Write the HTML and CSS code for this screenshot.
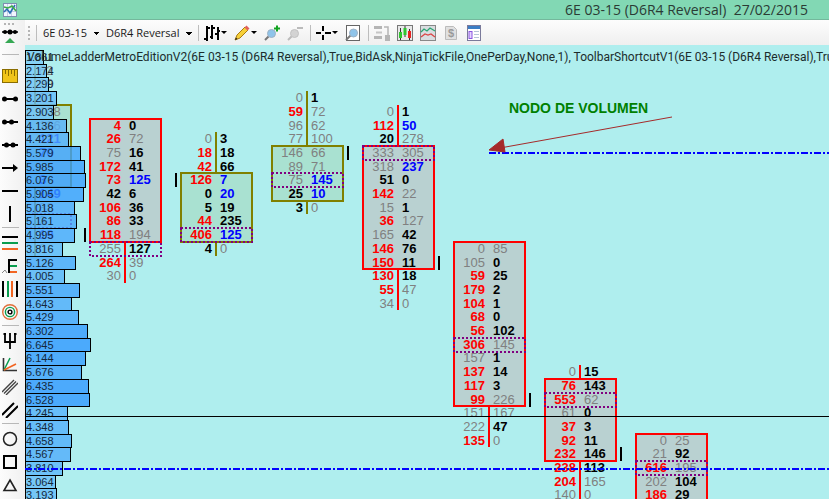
FILE: index.html
```
<!DOCTYPE html>
<html lang="es">
<head>
<meta charset="UTF-8">
<meta name="viewport" content="width=device-width, initial-scale=1.0">
<title>6E 03-15 (D6R4 Reversal)</title>
<link rel="stylesheet" href="styles.css">
</head>
<body>
<header class="titlebar">
    <svg class="app-icon" width="14" height="14" viewBox="0 0 14 14">
        <rect x="0.5" y="0.5" width="13" height="13" fill="#f2f5ff" stroke="#7f8fb0"/>
        <path d="M1 4.5h12M1 8.5h12M4.5 1v12M8.5 1v12" stroke="#c5cfe8"/>
        <path d="M1 9l3-3 3 4 5-8" fill="none" stroke="#2b6fb5" stroke-width="1.6"/>
        <path d="M1 4l4 1 4 -2 4 5" fill="none" stroke="#3fae49" stroke-width="1.6"/>
    </svg>
    <h1>6E 03-15 (D6R4 Reversal)&nbsp; 27/02/2015</h1>
</header>
<div class="window">
    <nav class="sidebar" aria-label="Dibujo">
        <span class="grip-h"></span>
        <button class="first" aria-label="Marcador"><svg width="16" height="18" viewBox="0 0 16 18"><path d="M0 5h16" stroke="#000" stroke-width="1.5"/><circle cx="3" cy="5" r="2"/><circle cx="8" cy="5" r="2.5"/><circle cx="13" cy="5" r="2"/><path d="M8 11l5 5H3z" fill="#35a853"/></svg></button>
        <hr>
        <button class="ruler" aria-label="Regla"><svg width="16" height="16" viewBox="0 0 16 16"><rect x="0.5" y="1.5" width="15" height="13" fill="#f0c419" stroke="#8a6d00"/><path d="M3.5 2v4M6.5 2v6M9.5 2v4M12.5 2v6" stroke="#8a6d00"/></svg></button>
        <button aria-label="Segmento"><svg width="16" height="16" viewBox="0 0 16 16"><path d="M2 8h12" stroke="#000" stroke-width="2"/><circle cx="2.5" cy="8" r="2.5"/><circle cx="13.5" cy="8" r="2.5"/></svg></button>
        <button aria-label="Rayo"><svg width="16" height="16" viewBox="0 0 16 16"><path d="M1 8h15" stroke="#000" stroke-width="2"/><circle cx="2.5" cy="8" r="2.5"/><circle cx="9.5" cy="8" r="2.5"/></svg></button>
        <button aria-label="Recta"><svg width="16" height="16" viewBox="0 0 16 16"><path d="M0 8h16" stroke="#000" stroke-width="2"/><circle cx="4.5" cy="8" r="2.5"/><circle cx="11" cy="8" r="2.5"/></svg></button>
        <button aria-label="Flecha"><svg width="16" height="16" viewBox="0 0 16 16"><path d="M0 8h13" stroke="#000" stroke-width="2"/><path d="M11 4l5 4-5 4z"/></svg></button>
        <button aria-label="Horizontal"><svg width="16" height="16" viewBox="0 0 16 16"><path d="M0 8h16" stroke="#000" stroke-width="2"/></svg></button>
        <button aria-label="Vertical"><svg width="16" height="16" viewBox="0 0 16 16"><path d="M8 0v16" stroke="#000" stroke-width="2"/></svg></button>
        <hr>
        <button aria-label="Niveles"><svg width="16" height="16" viewBox="0 0 16 16"><path d="M0 2h16" stroke="#000" stroke-width="2"/><path d="M0 8h16" stroke="#0a9d4f" stroke-width="2"/><path d="M0 14h16" stroke="#f26522" stroke-width="2"/></svg></button>
        <button aria-label="Extensiones"><svg width="16" height="16" viewBox="0 0 16 16"><path d="M0 15l3-3 2 3" fill="none" stroke="#888"/><path d="M7 15V2h8" fill="none" stroke="#000" stroke-width="2"/><path d="M8 8h7" stroke="#0a9d4f" stroke-width="2"/><path d="M8 14h7" stroke="#f26522" stroke-width="2"/></svg></button>
        <button aria-label="Tiempos"><svg width="16" height="16" viewBox="0 0 16 16"><path d="M1 0v16M15 0v16" stroke="#000" stroke-width="2"/><path d="M6 0v16" stroke="#0a9d4f" stroke-width="2"/><path d="M10 0v16" stroke="#f26522" stroke-width="2"/></svg></button>
        <button aria-label="Arcos"><svg width="16" height="16" viewBox="0 0 16 16" fill="none" stroke-width="1.4"><circle cx="8" cy="8" r="7.3" stroke="#e0703c"/><circle cx="8" cy="8" r="4.6" stroke="#0a9d4f"/><circle cx="8" cy="8" r="1.9" stroke="#000"/></svg></button>
        <hr>
        <button aria-label="Horquilla"><svg width="16" height="16" viewBox="0 0 16 16"><path d="M3 0v9h10V0M8 0v16M1.5 1H4M12 1h2.5" fill="none" stroke="#000" stroke-width="1.8"/></svg></button>
        <button aria-label="Abanico"><svg width="16" height="16" viewBox="0 0 16 16" fill="none"><path d="M1.5 2v12.5H15" stroke="#333" stroke-width="1.6"/><path d="M2 14L8 2" stroke="#0a9d4f" stroke-width="1.6"/><path d="M2 14l12-6" stroke="#f26522" stroke-width="1.6"/></svg></button>
        <button aria-label="Regresión"><svg width="16" height="16" viewBox="0 0 16 16" fill="none"><path d="M0 13L12 1M2 14.500L14 2.500M4 16L16 4" stroke="#444" stroke-width="1.400"/></svg></button>
        <button aria-label="Canal"><svg width="16" height="16" viewBox="0 0 16 16" fill="none"><path d="M0 13L12 1M4 16L16 4" stroke="#000" stroke-width="2"/></svg></button>
        <hr>
        <button aria-label="Elipse"><svg width="16" height="16" viewBox="0 0 16 16"><circle cx="8" cy="8" r="6.5" fill="none" stroke="#222" stroke-width="1.5"/></svg></button>
        <button aria-label="Rectángulo"><svg width="16" height="16" viewBox="0 0 16 16"><rect x="2" y="2" width="12" height="12" fill="none" stroke="#000" stroke-width="2"/></svg></button>
        <button aria-label="Triángulo"><svg width="16" height="16" viewBox="0 0 16 16"><path d="M8 3L14 13.5H2z" fill="none" stroke="#222" stroke-width="1.6"/></svg></button>
    </nav>
    <main class="content">
        <div class="toolbar">
            <span class="grip-v"></span>
            <span class="sep"></span>
            <select class="instrument" aria-label="Instrumento"><option>6E 03-15</option></select>
            <select class="template" aria-label="Plantilla"><option>D6R4 Reversal</option></select>
            <span class="sep"></span>
            <button class="drop" aria-label="Estilo"><svg width="16" height="16" viewBox="0 0 16 16"><path d="M3 1v15M8 0v14M14 2v13M0 14h3M3 3h3M6 12h2M8 3h3M11 9h3M14 6h2" stroke="#000" stroke-width="2"/></svg></button>
            <button class="drop" aria-label="Lápiz"><svg width="16" height="16" viewBox="0 0 16 16"><path d="M1 15l2-5 8-8 3 3-8 8z" fill="#f7d038" stroke="#a87b12"/><path d="M10.5 2.5l2-2 3 3-2 2z" fill="#e0605c"/><path d="M1 15l1-2.5L3.500 14z" fill="#222"/></svg></button>
            <button aria-label="Acercar"><svg width="16" height="16" viewBox="0 0 16 16"><path d="M1 15l4-4" stroke="#777" stroke-width="2"/><circle cx="7.500" cy="8.500" r="4" fill="#8fc4ea" stroke="#9db1c4"/><path d="M10 3.500h6M13 .5v6" stroke="#13a322" stroke-width="2"/></svg></button>
            <button aria-label="Alejar"><svg width="16" height="16" viewBox="0 0 16 16"><path d="M1 15l4-4" stroke="#bbb" stroke-width="2"/><circle cx="7.500" cy="8.500" r="4" fill="#d3d3d3" stroke="#c2c2c2"/><path d="M10 3h6" stroke="#bbb" stroke-width="2"/></svg></button>
            <span class="sep"></span>
            <button class="drop" aria-label="Cursor"><svg width="15" height="16" viewBox="0 0 15 16"><path d="M0 8h5M9 8h6M7 1v5M7 10v5" stroke="#000" stroke-width="2"/></svg></button>
            <button aria-label="Ampliar zona"><svg width="16" height="16" viewBox="0 0 16 16"><rect x="1.5" y="0.5" width="13" height="15" fill="#fff" stroke="#666"/><path d="M1 15l5-5" stroke="#777" stroke-width="2"/><circle cx="8.5" cy="8" r="4" fill="#8fc4ea" stroke="#9db1c4"/></svg></button>
            <span class="sep"></span>
            <button aria-label="Trader"><svg width="16" height="16" viewBox="0 0 16 16"><path d="M0 2.5h8M0 12.5h8" stroke="#b5b5b5" stroke-width="3"/><path d="M2 7.5h6" stroke="#c5c5c5" stroke-width="2"/><path d="M10 2h4v10" fill="none" stroke="#b5b5b5" stroke-width="1.5"/><rect x="11" y="10" width="5" height="6" fill="#b5b5b5"/></svg></button>
            <button aria-label="Series"><svg width="16" height="16" viewBox="0 0 16 16"><rect x="0.5" y="0.5" width="15" height="15" fill="#e8e8e8" stroke="#777"/><path d="M3.5 3v12M8 1v11M12.5 4v11" stroke="#333"/><path d="M2 7h3v6H2zM6.5 3h3v7h-3z" fill="#2fc52f"/><path d="M11 6h3v7h-3z" fill="#e62222"/></svg></button>
            <button aria-label="Indicadores"><svg width="16" height="16" viewBox="0 0 16 16"><rect x="0.5" y="0.5" width="15" height="15" fill="#d9dde0" stroke="#888"/><path d="M1 7l3-3 3 2 3-3 5 3" fill="none" stroke="#2aa572" stroke-width="1.3"/><path d="M1 12l4-3 3 1 3-1 4 3" fill="none" stroke="#dc4444" stroke-width="1.3"/></svg></button>
            <button aria-label="Estrategias"><svg width="16" height="16" viewBox="0 0 16 16"><path d="M2.5 1.5h8l3 3v10h-11z" fill="#e0e0e0" stroke="#bbb"/><text x="8" y="12" text-anchor="middle" class="dollar">$</text></svg></button>
            <button aria-label="Propiedades"><svg width="16" height="16" viewBox="0 0 16 16"><rect x="1.5" y="0.5" width="13" height="15" fill="#fff" stroke="#7a7a9a"/><path d="M2 2.5h12" stroke="#3b7dc4" stroke-width="3"/><rect x="3" y="6.5" width="3" height="7" fill="#e5d5ff" stroke="#8a55e0"/><path d="M8 6.5h5M8 9.5h5M8 12.5h5" stroke="#b5c4d8"/></svg></button>
        </div>
        <svg class="chart" id="chart"></svg>
    </main>
</div>

<script src="chart.js"></script>
</body>
</html>
```
FILE: styles.css
```
* {
    box-sizing: border-box;
}
body {
    margin: 0;
    height: 100vh;
    display: flex;
    flex-direction: column;
    overflow: hidden;
    font-family: "Open Sans", "Noto Sans", sans-serif;
    background-color: #afeeee;
}
.titlebar {
    display: flex;
    align-items: center;
    justify-content: space-between;
    height: 20px;
    padding: 0 21px 0 3px;
    background-color: #82d8b4;
    border-bottom: 1px solid #74b89c;
    flex: none;
}
h1 {
    margin: 0;
    font-size: 14px;
    line-height: 18px;
    font-weight: normal;
    color: #2b3b34;
}
.window {
    display: flex;
    flex: 1;
    min-height: 0;
}
.sidebar {
    display: flex;
    flex-direction: column;
    width: 25px;
    padding-right: 5px;
    background: linear-gradient(to right, #fcfcfc, #f0f0f0);
    overflow: hidden;
    flex: none;
}
.sidebar hr {
    width: 17px;
    height: 1px;
    margin: 2px 0 3px 2px;
    border: none;
    background-color: #b8b8b8;
    flex: none;
}
button {
    display: flex;
    align-items: center;
    justify-content: center;
    padding: 0;
    border: none;
    background: none;
    flex: none;
}
.sidebar button {
    height: 23px;
}
.sidebar .first {
    height: 22px;
}
.sidebar .first + hr {
    margin: 7px 0 9px 2px;
}
.grip-h {
    height: 2px;
    margin: 3px 5px 0 4px;
    background: repeating-linear-gradient(to right, #b5b5b5 0 2px, transparent 2px 4px);
    flex: none;
}
.grip-v {
    width: 2px;
    height: 14px;
    margin: 0 6px 0 3px;
    background: repeating-linear-gradient(to bottom, #b5b5b5 0 2px, transparent 2px 4px);
}
.content {
    display: flex;
    flex-direction: column;
    flex: 1;
    min-width: 0;
}
.toolbar {
    display: flex;
    align-items: center;
    height: 25px;
    background: linear-gradient(#fdfdfd, #efefef);
    flex: none;
}
.toolbar button {
    margin-right: 7px;
}
.sep {
    width: 1px;
    height: 16px;
    margin-right: 5px;
    background-color: #bdbdbd;
}
select {
    appearance: none;
    border: none;
    padding: 0 13px 0 0;
    margin: 0 5px 0 1px;
    font: 11px "Open Sans", sans-serif;
    color: #1a1a1a;
    background: conic-gradient(from 315deg at 50% 3px, #000 0 90deg, transparent 0) no-repeat right 1px top 7px / 6px 3px;
}
.drop::after {
    content: "";
    margin-left: 1px;
    border: 3px solid transparent;
    border-top-color: #000;
    border-bottom: none;
}
.dollar {
    font: bold 11px "Liberation Sans", sans-serif;
    fill: #999;
}
.chart {
    display: block;
    width: 100%;
    flex: 1;
    min-height: 0;
    background-color: #afeeee;
}
.chart text {
    font-family: "Liberation Sans", Arial, sans-serif;
}
.chart .cell {
    font-size: 13px;
}
.chart .strong {
    font-weight: bold;
}
.chart .bar {
    stroke: #000;
}
.chart .volume {
    font-size: 11px;
    fill: #14283c;
}
.chart .legend {
    font-family: Roboto, "Liberation Sans", sans-serif;
    font-size: 12px;
    fill: #1c2c2c;
}
.chart .note {
    font-size: 14px;
    font-weight: bold;
    fill: #008000;
}
.chart .poc {
    fill: none;
    stroke: #800080;
    stroke-width: 2;
    stroke-dasharray: 2 2;
}
.chart .level {
    stroke: #0000ff;
    stroke-width: 2;
    stroke-dasharray: 7 2 2 2;
}
.chart .price {
    stroke: #000;
}
.chart .arrow {
    stroke: #a52a2a;
    fill: #a52a2a;
}
```
FILE: chart.js
```
var chart = document.getElementById("chart");
var NS = "http://www.w3.org/2000/svg";

// volumen por precio
var volumes = ["1.861", "2.174", "2.299", "3.201", "2.903", "4.136", "4.421", "5.579", "5.985", "6.076", "5.905",
    "5.018", "5.161", "4.995", "3.816", "5.126", "4.005", "5.551", "4.643", "5.429", "6.302", "6.645", "6.144",
    "5.676", "6.435", "6.528", "4.245", "4.348", "4.658", "4.567", "3.810", "3.064", "3.193"];

// color de cada celda: r rojo, b azul, k negro, g gris
var inks = { r: "#ff0000", b: "#0000ff", k: "#000000", g: "#808080" };

var candles = [
    { x: 10, first: 1, body: [4, 9], poc: 12, color: "#808000", fill: "#a9e1d1", cells: [
        "g|62g", "g|29g", "g|0g", "g|108g", "g|136g", "g|121b", "g|70b", "g|", "g|3b", "g|149b", "g|38g", "g|3g", "g|19b", "g|0g"] },
    { x: 100, first: 5, body: [5, 13], poc: 14, mark: [-40, 13], color: "#ff0000", fill: "#b9d1d1", cells: [
        "4r|0k", "26r|72g", "75g|16k", "172r|41k", "73r|125b", "42k|6k", "106r|36k", "86r|33k", "118r|194g", "255g|127k", "264r|39g", "30g|0g"] },
    { x: 191, first: 6, body: [9, 13], poc: 13, mark: [-40, 9], color: "#808000", fill: "#a9e1d1", cells: [
        "0g|3k", "18r|18k", "42r|66k", "126r|7b", "0k|20b", "5k|19k", "44r|235k", "406r|125b", "4k|0g"] },
    { x: 282, first: 3, body: [7, 10], poc: 9, mark: [41, 7], color: "#808000", fill: "#a9e1d1", cells: [
        "0g|1k", "59r|72g", "96g|62g", "77g|100g", "146g|66g", "89g|71g", "75g|145b", "25k|10b", "3k|0g"] },
    { x: 373, first: 4, body: [7, 15], poc: 7, mark: [41, 15], color: "#ff0000", fill: "#b9d1d1", cells: [
        "0g|1k", "112r|50b", "20k|278g", "333g|305g", "318g|237b", "51k|0k", "142r|22g", "15g|1k", "36r|127g", "165g|42k",
        "146r|76k", "150r|11k", "130r|18k", "55r|47g", "34g|0g"] },
    { x: 464, first: 14, body: [14, 25], poc: 21, mark: [41, 25], color: "#ff0000", fill: "#b9d1d1", cells: [
        "0g|85g", "105g|0k", "59r|25k", "179r|2k", "104r|1k", "68r|0k", "56r|102k", "306r|145g", "157g|1k", "137r|14k",
        "117r|3k", "99r|226g", "151g|167g", "222g|47k", "135r|0g"] },
    { x: 555, first: 23, body: [24, 29], poc: 25, mark: [41, 29], color: "#ff0000", fill: "#b9d1d1", cells: [
        "0g|15k", "76r|143k", "553r|62g", "61g|0k", "37r|3k", "92r|11k", "232r|146k", "238r|113k", "204r|165g", "140g|0g"] },
    { x: 646, first: 28, body: [28, 34], poc: 30, color: "#ff0000", fill: "#b9d1d1", cells: [
        "0g|25g", "21g|92k", "616r|195g", "202g|104k", "186r|29k"] }
];

function rowTop(row) {
    return 5 + Math.round(row * 13.7);
}

function add(tag, attrs, text) {
    var el = document.createElementNS(NS, tag);
    for (var key in attrs) {
        el.setAttribute(key, attrs[key]);
    }
    if (text) {
        el.textContent = text;
    }
    chart.appendChild(el);
}

function drawCell(value, x, row, anchor) {
    var number = value.slice(0, -1);
    var ink = value.slice(-1);
    if (number === "") {
        return;
    }
    add("text", {
        x: x, y: rowTop(row) + 11, "text-anchor": anchor, fill: inks[ink],
        class: ink === "g" ? "cell" : "cell strong"
    }, number);
}

function drawCandle(c) {
    var last = c.first + c.cells.length;
    var top = rowTop(c.body[0]);
    var bottom = rowTop(c.body[1] + 1);
    add("rect", { x: c.x - 1, y: rowTop(c.first), width: 2, height: rowTop(last) - rowTop(c.first), fill: c.color });
    add("rect", { x: c.x - 35, y: top, width: 71, height: bottom - top, fill: c.fill, stroke: c.color, "stroke-width": 2 });
    add("rect", { x: c.x - 35, y: rowTop(c.poc), width: 71, height: 14, class: "poc" });
    c.cells.forEach(function (cell, i) {
        var sides = cell.split("|");
        drawCell(sides[0], c.x - 4, c.first + i, "end");
        drawCell(sides[1], c.x + 4, c.first + i, "start");
    });
    if (c.mark) {
        add("rect", { x: c.x + c.mark[0] - 1, y: rowTop(c.mark[1]), width: 2, height: 14, fill: "#000" });
    }
}

candles.forEach(drawCandle);

// barras del perfil, mas oscuras cuanto mas volumen
volumes.forEach(function (label, row) {
    var v = Number(label) * 1000;
    var t = Math.min(1, (v - 1800) / 4700);
    var color = "rgb(" + Math.round(125 - 75 * t) + "," + Math.round(204 - 52 * t) + "," + Math.round(246 + 9 * t) + ")";
    add("rect", {
        x: 0.5, y: rowTop(row) + 0.5, width: Math.round(v / 102), height: rowTop(row + 1) - rowTop(row),
        fill: color, "fill-opacity": 0.8, class: "bar"
    });
});
volumes.forEach(function (label, row) {
    add("text", { x: 1, y: rowTop(row) + 11, class: "volume" }, label);
});

add("text", { x: 2, y: 16, class: "legend" },
    "VolumeLadderMetroEditionV2(6E 03-15 (D6R4 Reversal),True,BidAsk,NinjaTickFile,OnePerDay,None,1), ToolbarShortcutV1(6E 03-15 (D6R4 Reversal),True,True,True)");

add("line", { x1: 464, y1: 108, x2: "100%", y2: 108, class: "level" });
add("line", { x1: 0, y1: 424, x2: "100%", y2: 424, class: "level" });
add("line", { x1: 0, y1: 371.5, x2: "100%", y2: 371.5, class: "price" });

add("line", { x1: 475, y1: 103, x2: 647, y2: 72, class: "arrow" });
add("polygon", { points: "464,105 478,94 480,107", class: "arrow" });
add("text", { x: 484, y: 68, class: "note" }, "NODO DE VOLUMEN");
```
